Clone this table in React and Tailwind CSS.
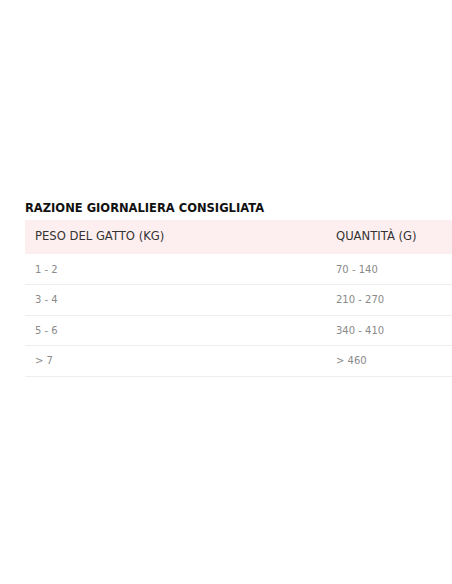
const rows = [
  ["1 - 2", "70 - 140"],
  ["3 - 4", "210 - 270"],
  ["5 - 6", "340 - 410"],
  ["> 7", "> 460"],
];

export default function App() {
  return (
    <div className="min-h-[584px] bg-white pt-[201px] pl-[25px] font-['DejaVu_Sans',sans-serif]">
      <h3 className="text-[11.5px] font-bold leading-[14px] text-[#111]">
        RAZIONE GIORNALIERA CONSIGLIATA
      </h3>
      <table className="mt-[5px] w-full border-collapse">
        <thead>
          <tr className="bg-[#fdefef]">
            <th className="h-[34px] w-[301px] pl-[10px] text-left text-[11.6px] font-normal text-[#333]">
              PESO DEL GATTO (KG)
            </th>
            <th className="pl-[10px] text-left text-[11.6px] font-normal text-[#333]">QUANTITÀ (G)</th>
          </tr>
        </thead>
        <tbody>
          {rows.map(([a, b]) => (
            <tr key={a} className="border-b border-[#eeeeee]">
              <td className="h-[30.5px] pl-[10px] text-[10px] text-[#8a8a8a]">{a}</td>
              <td className="pl-[10px] text-[10px] text-[#8a8a8a]">{b}</td>
            </tr>
          ))}
        </tbody>
      </table>
    </div>
  );
}
